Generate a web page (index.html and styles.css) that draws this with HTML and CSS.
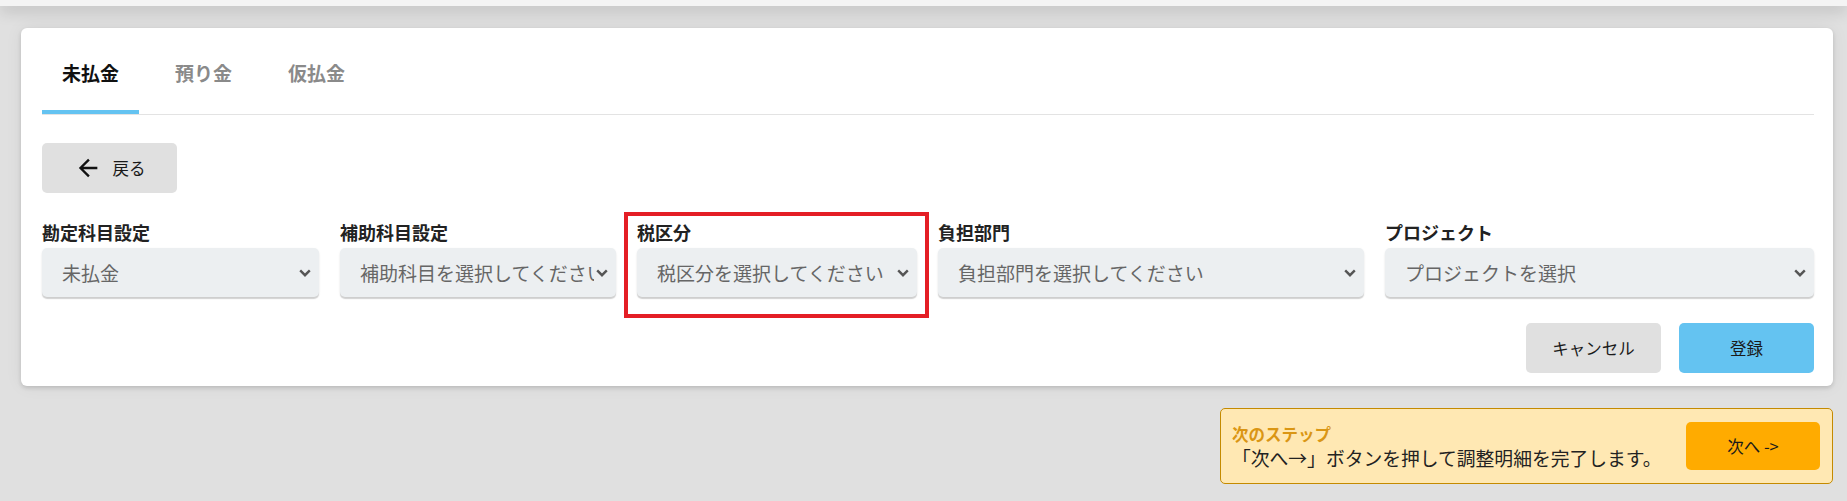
FILE: index.html
```html
<html lang="ja">
<head>
    <meta charset="UTF-8">
    <meta name="viewport" content="width=device-width, initial-scale=1.0">
    <title>調整明細</title>
    <link rel="stylesheet" href="styles.css">
</head>
<body>
    <div class="topbar"></div>

    <main class="page">
        <section class="card">
            <nav class="tabs">
                <button class="tab active">未払金</button>
                <button class="tab">預り金</button>
                <button class="tab">仮払金</button>
            </nav>

            <button class="btn btn-back">
                <svg class="icon-arrow" viewBox="0 0 24 24"><path d="M20,11V13H8L13.5,18.5L12.08,19.92L4.16,12L12.08,4.08L13.5,5.5L8,11H20Z"/></svg>
                <span>戻る</span>
            </button>

            <div class="fields">
                <div class="field">
                    <label>勘定科目設定</label>
                    <div class="select">
                        <span class="value">未払金</span>
                        <svg class="chevron" viewBox="0 0 12 8"><path d="M1.2 1.4 L6 6.2 L10.8 1.4"/></svg>
                    </div>
                </div>
                <div class="field">
                    <label>補助科目設定</label>
                    <div class="select">
                        <span class="value">補助科目を選択してください</span>
                        <svg class="chevron" viewBox="0 0 12 8"><path d="M1.2 1.4 L6 6.2 L10.8 1.4"/></svg>
                    </div>
                </div>
                <div class="field flagged">
                    <label>税区分</label>
                    <div class="select">
                        <span class="value">税区分を選択してください</span>
                        <svg class="chevron" viewBox="0 0 12 8"><path d="M1.2 1.4 L6 6.2 L10.8 1.4"/></svg>
                    </div>
                    <div class="flag"></div> <!-- red annotation frame -->
                </div>
                <div class="field">
                    <label>負担部門</label>
                    <div class="select">
                        <span class="value">負担部門を選択してください</span>
                        <svg class="chevron" viewBox="0 0 12 8"><path d="M1.2 1.4 L6 6.2 L10.8 1.4"/></svg>
                    </div>
                </div>
                <div class="field">
                    <label>プロジェクト</label>
                    <div class="select">
                        <span class="value">プロジェクトを選択</span>
                        <svg class="chevron" viewBox="0 0 12 8"><path d="M1.2 1.4 L6 6.2 L10.8 1.4"/></svg>
                    </div>
                </div>
            </div>

            <div class="actions">
                <button class="btn btn-cancel">キャンセル</button>
                <button class="btn btn-save">登録</button>
            </div>
        </section>

        <div class="next-step">
            <div class="next-text">
                <div class="next-title">次のステップ</div>
                <div class="next-desc">「次へ→」ボタンを押して調整明細を完了します。</div>
            </div>
            <button class="btn btn-next">次へ -&gt;</button>
        </div>
    </main>
</body>
</html>
```

FILE: styles.css
```css
body {
    margin: 0;
    background-color: #e0e0e0;
    font-family: "Noto Sans CJK JP", "Noto Sans", sans-serif;
    color: #222222;
}

.topbar {
    height: 6px;
    background-color: #f4f4f4;
    box-shadow: 0 3px 16px rgba(0, 0, 0, 0.28);
}

.page {
    padding: 22px 14px 0 21px;
}

.card {
    background-color: #ffffff;
    border-radius: 6px;
    padding: 20px 19px 13px 21px;
    box-shadow: 0 2px 4px rgba(0, 0, 0, 0.14), 0 0 18px rgba(0, 0, 0, 0.06);
}

/* Tabs */
.tabs {
    display: flex;
    gap: 16px;
    border-bottom: 1px solid #e3e3e3;
}

.tab {
    font-family: inherit;
    font-size: 19px;
    font-weight: bold;
    line-height: 26px;
    color: #8a8a8a;
    background: none;
    border: none;
    border-bottom: 4px solid transparent;
    padding: 12px 20px 24px;
    cursor: pointer;
}

.tab.active {
    color: #111111;
    border-bottom-color: #64c3f1;
}

/* Buttons */
.btn {
    font-family: inherit;
    font-size: 16.5px;
    color: #1a1a1a;
    border: none;
    border-radius: 5px;
    cursor: pointer;
    display: inline-flex;
    align-items: center;
    justify-content: center;
    height: 50px;
    width: 135px;
    padding: 0;
}

.btn-back {
    margin-top: 28px;
    background-color: #e0e0e0;
    gap: 11px;
}

.icon-arrow {
    width: 28px;
    height: 28px;
    fill: #111111;
}

/* Select fields */
.fields {
    display: grid;
    grid-template-columns: 277px 276px 280px 426px 1fr;
    column-gap: 21px;
    margin-top: 27px;
}

.field {
    min-width: 0;
}

.field label {
    display: block;
    font-size: 18px;
    font-weight: bold;
    line-height: 24px;
    color: #222222;
    margin-bottom: 4px;
}

.select {
    height: 49px;
    display: flex;
    align-items: center;
    padding: 0 8px 0 20px;
    background-color: #eceff1;
    border-radius: 5px;
    box-shadow: 0 2px 1px rgba(0, 0, 0, 0.16), 0 1px 3px rgba(0, 0, 0, 0.06);
    font-size: 19px;
    color: #666666;
}

.select .value {
    flex: 1;
    min-width: 0;
    overflow: hidden;
    white-space: nowrap;
    margin-right: 2px;
}

.chevron {
    width: 12px;
    height: 8px;
    flex-shrink: 0;
    fill: none;
    stroke: #555555;
    stroke-width: 2.4;
}

.flagged {
    position: relative;
}

.flag {
    position: absolute;
    left: -13px;
    right: -12px;
    top: -8px;
    bottom: -21px;
    border: 4px solid #e41e25;
    pointer-events: none;
}

/* Actions */
.actions {
    display: flex;
    justify-content: flex-end;
    gap: 18px;
    margin-top: 26px;
}

.btn-cancel {
    background-color: #e0e0e0;
}

.btn-save {
    background-color: #64c3f1;
}

/* Next step banner */
.next-step {
    box-sizing: border-box;
    width: 613px;
    height: 76px;
    margin: 22px 0 0 auto;
    display: flex;
    align-items: center;
    justify-content: space-between;
    padding: 0 12px 0 11px;
    background-color: #ffe8b3;
    border: 1px solid #c48a00;
    border-radius: 5px;
}

.next-title {
    font-size: 16.5px;
    font-weight: bold;
    line-height: 22px;
    color: #da9614;
}

.next-desc {
    font-size: 18.8px;
    line-height: 25px;
    color: #222222;
}

.btn-next {
    width: 134px;
    height: 48px;
    background-color: #ffab00;
}
```
